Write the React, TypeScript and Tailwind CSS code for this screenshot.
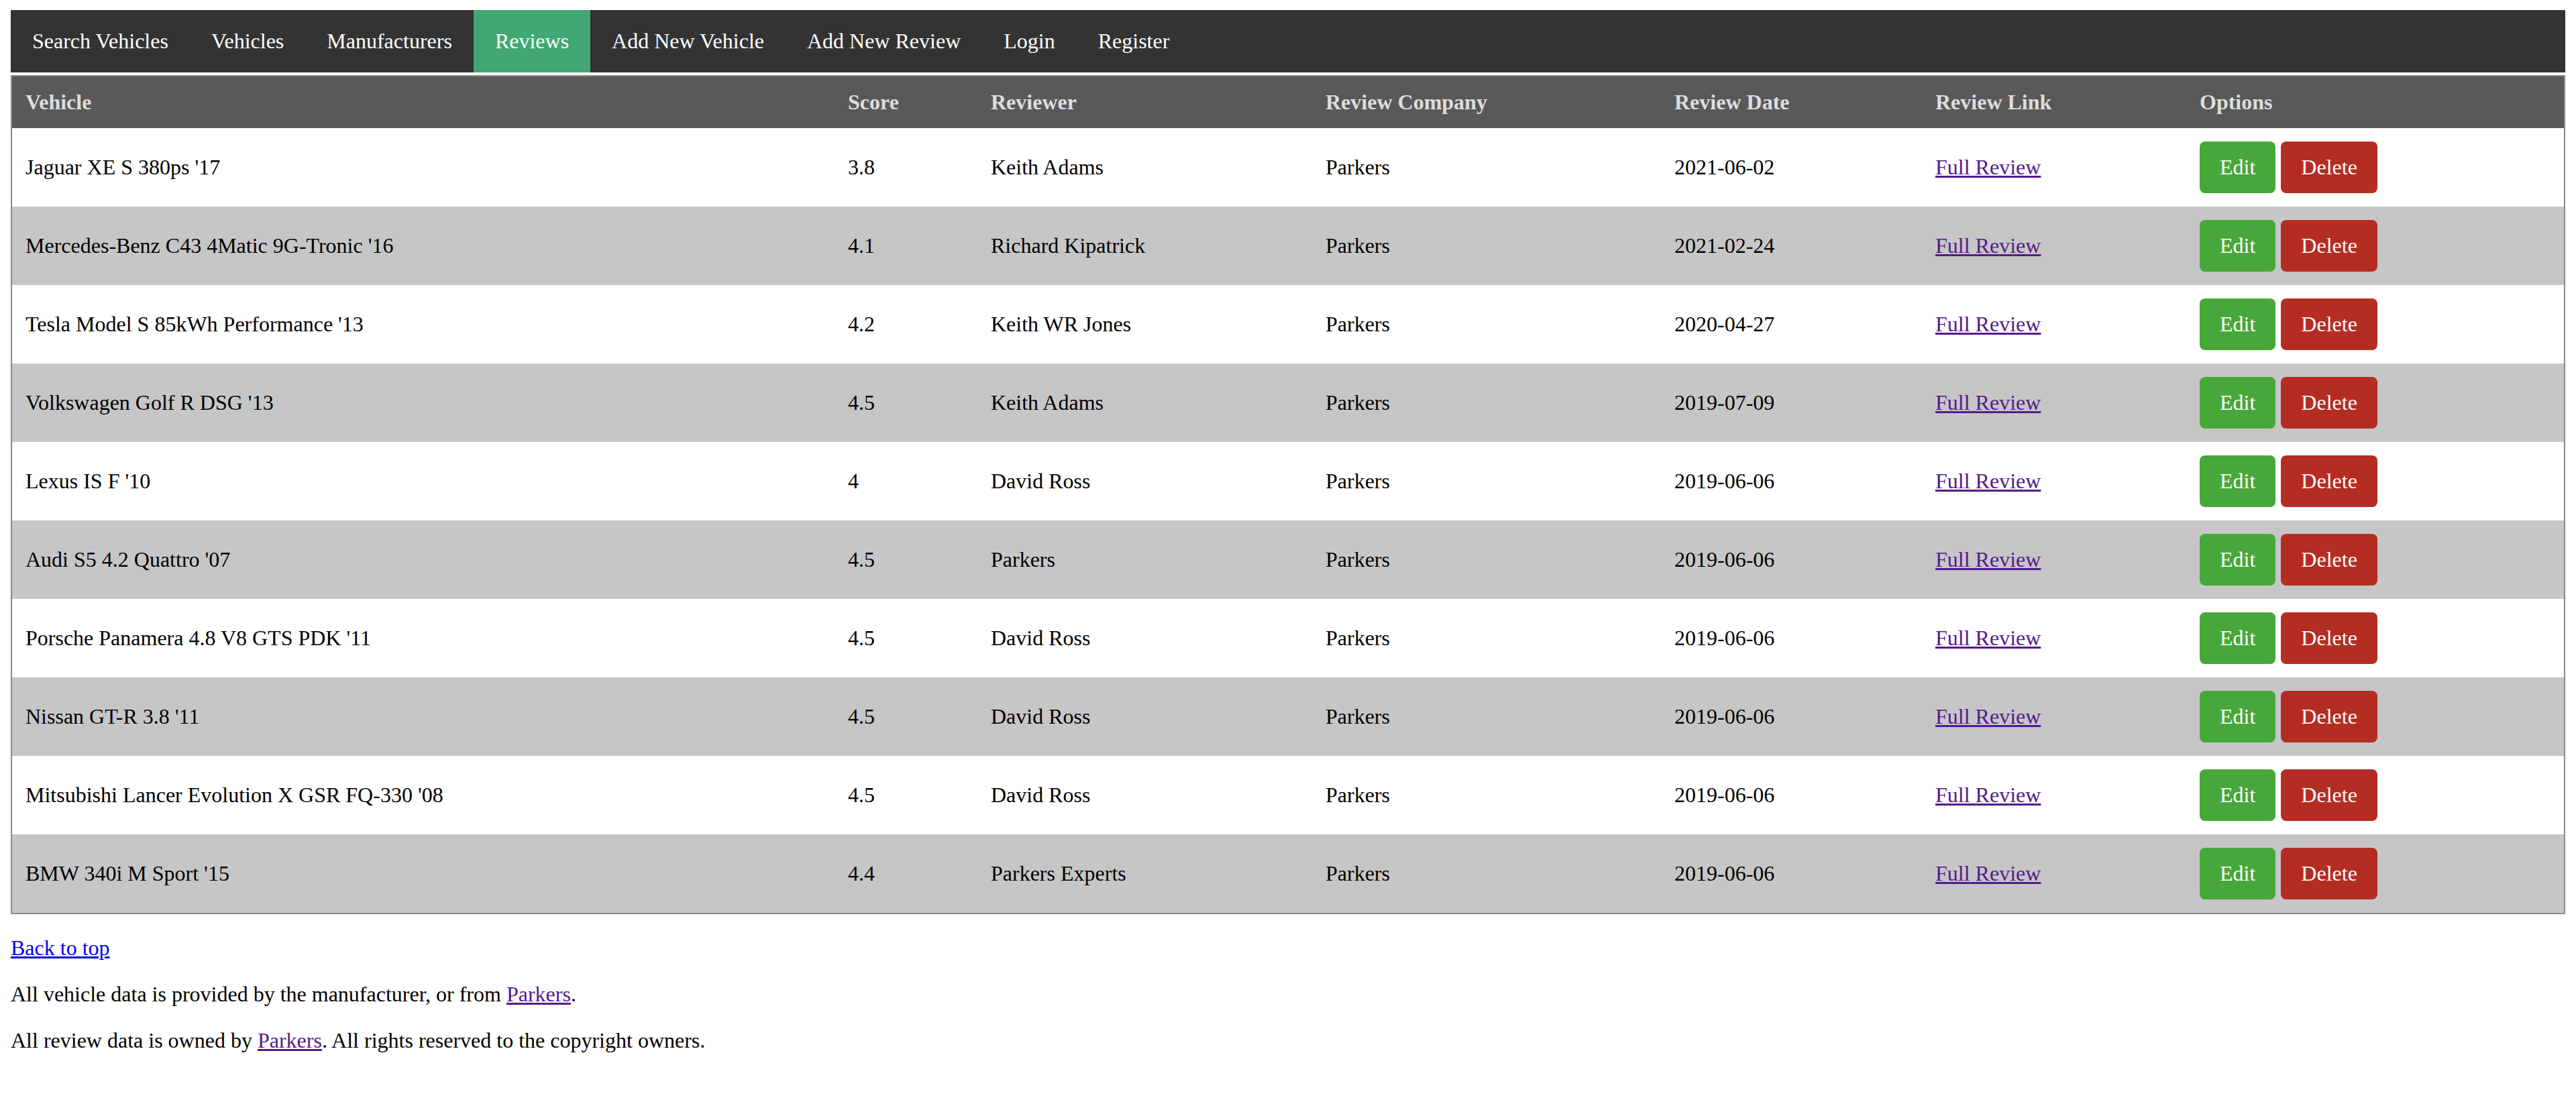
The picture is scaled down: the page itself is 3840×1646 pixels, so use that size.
import React from "react";

const rows = [
  ["Jaguar XE S 380ps '17", "3.8", "Keith Adams", "Parkers", "2021-06-02"],
  ["Mercedes-Benz C43 4Matic 9G-Tronic '16", "4.1", "Richard Kipatrick", "Parkers", "2021-02-24"],
  ["Tesla Model S 85kWh Performance '13", "4.2", "Keith WR Jones", "Parkers", "2020-04-27"],
  ["Volkswagen Golf R DSG '13", "4.5", "Keith Adams", "Parkers", "2019-07-09"],
  ["Lexus IS F '10", "4", "David Ross", "Parkers", "2019-06-06"],
  ["Audi S5 4.2 Quattro '07", "4.5", "Parkers", "Parkers", "2019-06-06"],
  ["Porsche Panamera 4.8 V8 GTS PDK '11", "4.5", "David Ross", "Parkers", "2019-06-06"],
  ["Nissan GT-R 3.8 '11", "4.5", "David Ross", "Parkers", "2019-06-06"],
  ["Mitsubishi Lancer Evolution X GSR FQ-330 '08", "4.5", "David Ross", "Parkers", "2019-06-06"],
  ["BMW 340i M Sport '15", "4.4", "Parkers Experts", "Parkers", "2019-06-06"],
];

const navItems = [
  "Search Vehicles",
  "Vehicles",
  "Manufacturers",
  "Reviews",
  "Add New Vehicle",
  "Add New Review",
  "Login",
  "Register",
];

export default function App() {
  return (
    <div className="bg-white px-[16px] pt-[15px] pb-[20px] text-[32px] leading-[37px] text-black font-['Liberation_Serif','Times_New_Roman',serif]">
      <nav className="flex h-[93px] bg-[#333333]">
        {navItems.map((n) => (
          <a
            key={n}
            href="#"
            className={
              "flex items-center px-[32px] text-white no-underline " +
              (n === "Reviews" ? "bg-[#41a873]" : "")
            }
          >
            {n}
          </a>
        ))}
      </nav>
      <table className="mt-[4px] w-full table-fixed border-separate border-spacing-0 border-2 border-[#888888]">
        <thead>
          <tr className="h-[77px] bg-[#595959] text-left text-[#dddddd]">
            <th className="w-[1226px] px-[20px] font-bold">Vehicle</th>
            <th className="w-[213px] px-[20px] font-bold">Score</th>
            <th className="w-[499px] px-[20px] font-bold">Reviewer</th>
            <th className="w-[520px] px-[20px] font-bold">Review Company</th>
            <th className="w-[389px] px-[20px] font-bold">Review Date</th>
            <th className="w-[394px] px-[20px] font-bold">Review Link</th>
            <th className="px-[20px] font-bold">Options</th>
          </tr>
        </thead>
        <tbody>
          {rows.map((r, i) => (
            <tr key={i} className={"h-[117px] " + (i % 2 === 1 ? "bg-[#c6c6c6]" : "bg-white")}>
              <td className="px-[20px]">{r[0]}</td>
              <td className="px-[20px]">{r[1]}</td>
              <td className="px-[20px]">{r[2]}</td>
              <td className="px-[20px]">{r[3]}</td>
              <td className="px-[20px]">{r[4]}</td>
              <td className="px-[20px]">
                <a href="#" className="text-[#551a8b] underline">Full Review</a>
              </td>
              <td className="px-[20px]">
                <div className="flex gap-[8px]">
                  <button className="h-[77px] rounded-[8px] bg-[#48a73a] px-[30px] text-white">Edit</button>
                  <button className="h-[77px] rounded-[8px] bg-[#b42d23] px-[30px] text-white">Delete</button>
                </div>
              </td>
            </tr>
          ))}
        </tbody>
      </table>
      <p className="mt-[32px]">
        <a href="#" className="text-[#0000ee] underline">Back to top</a>
      </p>
      <p className="mt-[32px]">
        All vehicle data is provided by the manufacturer, or from{" "}
        <a href="#" className="text-[#551a8b] underline">Parkers</a>.
      </p>
      <p className="mt-[32px]">
        All review data is owned by{" "}
        <a href="#" className="text-[#551a8b] underline">Parkers</a>. All rights reserved to the copyright owners.
      </p>
    </div>
  );
}
